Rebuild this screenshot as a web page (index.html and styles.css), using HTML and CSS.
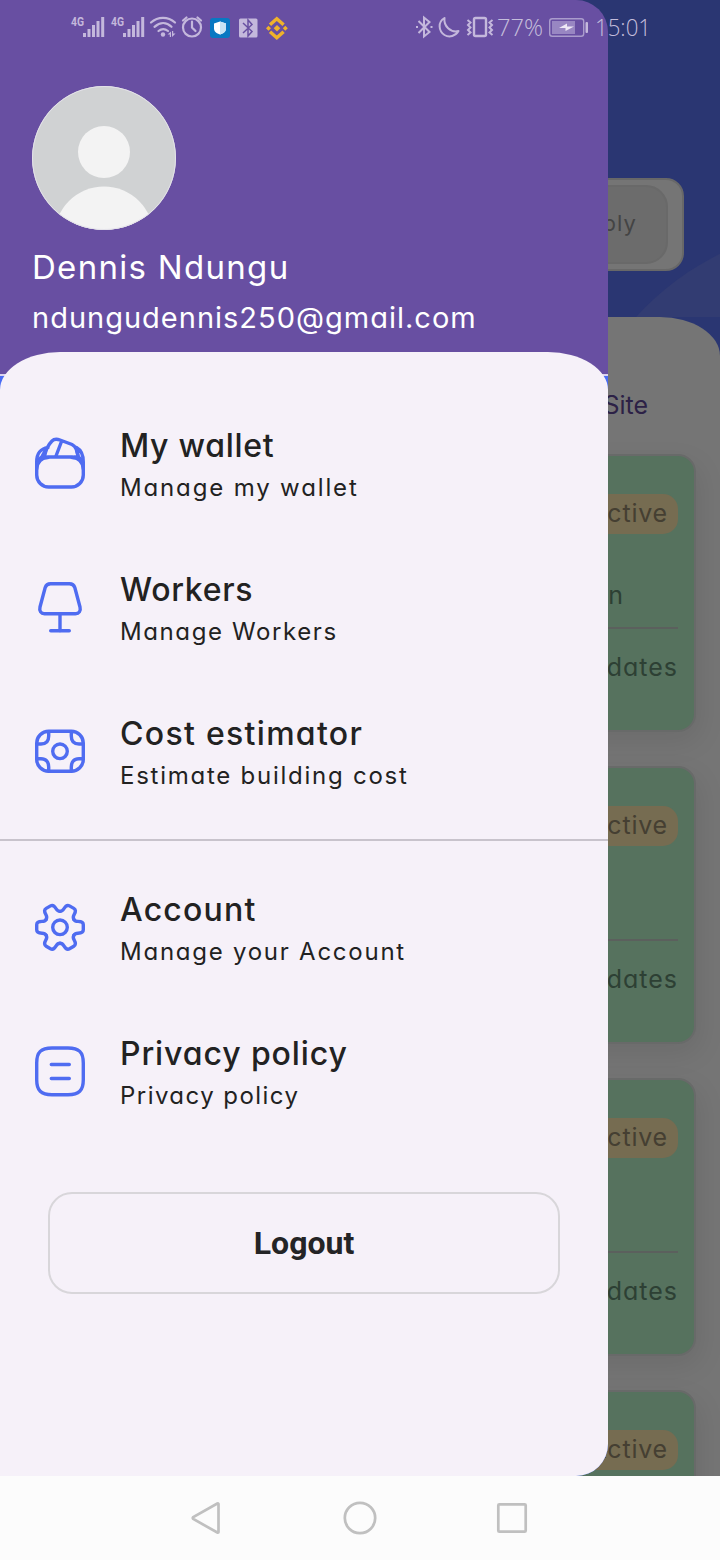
FILE: index.html
```html
<!DOCTYPE html>
<html lang="en">
<head>
<meta charset="utf-8">
<title>Menu</title>
<link rel="stylesheet" href="styles.css">
</head>
<body>
<div class="phone">
  <main class="home">
    <div class="hero">
      <div class="hero-glow"></div>
      <div class="search"><span class="supply">Supply</span></div>
    </div>
    <section class="feed">
      <div class="tabs">Site</div>
      <article class="card"><span class="badge">Active</span><p class="place">n</p><p class="updates">Updates</p></article>
      <article class="card"><span class="badge">Active</span><p class="place"></p><p class="updates">Updates</p></article>
      <article class="card"><span class="badge">Active</span><p class="place"></p><p class="updates">Updates</p></article>
      <article class="card"><span class="badge">Active</span></article>
    </section>
  </main>

  <aside class="drawer">
    <header class="profile">
      <svg class="avatar" viewBox="0 0 144 144">
        <defs><clipPath id="round"><circle cx="72" cy="72" r="72"/></clipPath></defs>
        <g clip-path="url(#round)"><rect width="144" height="144" fill="#d0d2d3"/><circle cx="72" cy="66" r="26" fill="#f3f3f3"/><circle cx="72" cy="150" r="49.5" fill="#f3f3f3"/></g>
        <circle cx="72" cy="72" r="71.5" fill="none" stroke="#e4e2ea" stroke-width="1"/>
      </svg>
      <div class="name">Dennis Ndungu</div>
      <div class="email">ndungudennis250@gmail.com</div>
    </header>
    <nav class="menu">
      <a class="item">
        <svg class="icon" viewBox="0 0 60 60"><rect x="6.7" y="24" width="46.6" height="30" rx="12"/><path d="M6.7 36V29C6.7 20 10 16 18 14.5M14.5 24C15.500 17 19 11 22 8C24 6 27 6 30 7L42 11.500C46 13.500 47.500 17 48 24M31.500 8.500L26 23M46.500 14.500C51 17 53.300 21 53.300 29V36"/><path d="M8 28C9 25.500 11 24 15 24M52 28C51 25.500 49 24 45 24"/><path d="M8 30C9 26.500 13 24.500 18 24.500M52 30C51 26.500 47 24.500 42 24.500M11.500 24.500L15.500 17M48.500 24.500L46.500 17"/></svg>
        <span class="label"><b class="title t-wallet">My wallet</b><span class="sub s-wallet">Manage my wallet</span></span>
      </a>
      <a class="item">
        <svg class="icon" viewBox="0 0 60 60"><path d="M20.500 6.700H39.500C42.500 6.700 44 8 44.800 10.500L50 30C51 34 49 36.700 45.500 36.700H14.500C11 36.700 9 34 10 30L15.200 10.500C16 8 17.500 6.700 20.500 6.700ZM30 37V54M20.700 53.700H39.300"/></svg>
        <span class="label"><b class="title t-workers">Workers</b><span class="sub s-workers">Manage Workers</span></span>
      </a>
      <a class="item">
        <svg class="icon" viewBox="0 0 60 60"><rect x="6.700" y="10.300" width="46.600" height="40" rx="12"/><circle cx="30" cy="30.300" r="7.300"/><path d="M18.700 11V15C18.700 20 16 23 11 23H7M41.300 11V15C41.300 20 44 23 49 23H53M18.700 50V46C18.700 41 16 37.700 11 37.700H7M41.300 50V46C41.300 41 44 37.700 49 37.700H53"/></svg>
        <span class="label"><b class="title t-cost">Cost estimator</b><span class="sub s-cost">Estimate building cost</span></span>
      </a>
      <hr class="rule">
      <a class="item">
        <svg class="icon" viewBox="0 0 60 60">
          <defs><path id="tooth" d="M13.800 -8C14.800 -6.300 16.500 -5.900 18 -5.900C21.500 -5.900 23.300 -4.500 23.300 -2.500V2.500C23.300 4.500 21.500 5.900 18 5.900C16.500 5.900 14.800 6.300 13.800 8"/></defs>
          <g transform="translate(30 30.300)"><circle r="7.300"/><use href="#tooth"/><use href="#tooth" transform="rotate(60)"/><use href="#tooth" transform="rotate(120)"/><use href="#tooth" transform="rotate(180)"/><use href="#tooth" transform="rotate(240)"/><use href="#tooth" transform="rotate(300)"/></g>
        </svg>
        <span class="label"><b class="title t-account">Account</b><span class="sub s-account">Manage your Account</span></span>
      </a>
      <a class="item">
        <svg class="icon" viewBox="0 0 60 60"><path d="M22 7H38C49 7 53.300 11 53.300 22V38.700C53.300 49.500 49 53.700 38 53.700H22C11 53.700 6.700 49.500 6.700 38.700V22C6.700 11 11 7 22 7ZM21.300 23.500H39.300M21.300 37.500H39.300"/></svg>
        <span class="label"><b class="title t-privacy">Privacy policy</b><span class="sub s-privacy">Privacy policy</span></span>
      </a>
      <button class="logout">Logout</button>
    </nav>
  </aside>

  <div class="status">
    <svg class="status-icons" viewBox="0 0 720 56">
      <g fill="#c4b8dc">
        <text class="net" x="71" y="26" textLength="13" lengthAdjust="spacingAndGlyphs">4G</text>
        <text class="net" x="111" y="26" textLength="13" lengthAdjust="spacingAndGlyphs">4G</text>
        <path id="bars" d="M83 33h3v4h-3zM87.500 29h3v8h-3zM92 25h3v12h-3zM96.500 21h3v16h-3zM101.200 17h3v20h-3z"/>
        <use href="#bars" x="40"/>
        <circle cx="163" cy="34.500" r="2.200"/>
        <path d="M167.500 34.500l3.500 -3v5.500h-1.200v-2.500zM175.500 33.500l-3.500 3.500v-6h1.200v2.500z"/>
        <rect x="239" y="18.500" width="18.500" height="19" rx="1.500"/>
      </g>
      <g fill="none" stroke="#c4b8dc" stroke-width="2.200" stroke-linecap="round">
        <path d="M151 22.500C158 16.200 168 16.200 175 22.500M154.500 26.800C160 22 166.500 22 171.500 26.800M158.500 31C161.500 28.500 165 28.500 168 31"/>
        <circle cx="192" cy="27.500" r="9"/><path d="M192 22v6l3.500 3.500M183 21l3.500-3M201 21l-3.500-3" transform="translate(0 -.5)"/>
      </g>
      <path d="M243 23l9 8.500-4 4.500V20l4 4.500-9 8.500" fill="none" stroke="#684fa2" stroke-width="1.500"/>
      <rect x="210" y="18" width="20" height="20" rx="3" fill="#0878c2"/>
      <path d="M220 21.500l6 2v5c0 3-2.500 5-6 6-3.500-1-6-3-6-6v-5z" fill="#fff"/><path d="M220 21.500l6 2v5c0 3-2.500 5-6 6z" fill="#c7e3f4"/>
      <g fill="none" stroke="#f0b22a" stroke-width="3.400"><path d="M270 24.800l6.800-6 6.800 6M270 31.700l6.800 6 6.800-6"/></g>
      <path d="M277 25l3.300 3.300-3.300 3.300-3.300-3.300zM268.500 25.800l2.500 2.500-2.500 2.500-2.500-2.500zM285.300 25.800l2.500 2.500-2.500 2.500-2.500-2.500z" fill="#f0b22a"/>
      <g fill="none" stroke="#c4b8dc" stroke-width="2">
        <path d="M418.500 21l11 11-5.500 4.500V17.500l5.500 4.500-11 11"/>
        <path d="M416 27h2M430.500 27h2"/>
        <path d="M444.500 18c-7 4-6 13 0 17 5 3 11 1 14-4-8 2-15-5-14-13z" stroke-linejoin="round"/>
        <rect x="474" y="18" width="12" height="18" rx="1.500" stroke-width="2.400"/>
        <path d="M467.500 20l3 2.500-2.500 2.500 2.500 2.500-2.500 2.500 2.500 2.500-3 2.500M492.500 20l-3 2.500 2.500 2.500-2.500 2.500 2.500 2.500-2.500 2.500 3 2.500"/>
        <rect x="549.700" y="18.700" width="34" height="17.600" rx="2.500" stroke="#aa9ccc" stroke-width="1.400"/>
      </g>
      <rect x="552" y="21" width="23" height="13" fill="#9886c2"/><rect x="585.500" y="22" width="2.500" height="11" rx="1" fill="#c4b8dc"/>
      <path d="M559 28l8-4.500v3h7l-8.500 4.500v-3z" fill="#ede8f5"/>
      <text class="clock" x="497" y="36" textLength="46" lengthAdjust="spacingAndGlyphs">77%</text>
      <text class="clock" x="595" y="36" textLength="56" lengthAdjust="spacingAndGlyphs">15:01</text>
    </svg>
  </div>

  <footer class="navbar">
    <svg viewBox="0 0 32 32"><path d="M26.500 2V30Q26.500 31 25.300 30.500L1.300 17Q.3 16 1.300 15L25.300 1.500Q26.500 1 26.500 2Z"/></svg>
    <svg viewBox="0 0 32 32"><circle cx="16" cy="16" r="15.200"/></svg>
    <svg viewBox="0 0 32 32"><rect x="2.300" y="2.300" width="27.400" height="27.400" rx="1"/></svg>
  </footer>
</div>
</body>
</html>
```
FILE: styles.css
```css
* { box-sizing: border-box; }
body { margin: 0; }
p { margin: 0; }
.phone {
  position: relative;
  width: 720px;
  height: 1560px;
  overflow: hidden;
  display: flex;
  flex-direction: column;
  background: #fcfcfc;
  font-family: Inter, "Liberation Sans", sans-serif;
  font-feature-settings: "cv11", "ss03";
}

/* dimmed page under the drawer */
.home { height: 1476px; overflow: hidden; background: #2a3672; }
.hero { position: relative; height: 317px; padding: 178px 36px 0; overflow: hidden; }
.hero-glow {
  position: absolute;
  left: 563px;
  top: 225px;
  width: 562px;
  height: 562px;
  border-radius: 50%;
  background: #323c72;
}
.search {
  position: relative;
  height: 93px;
  padding: 5px 14px;
  border: 2px solid #686868;
  border-radius: 18px;
  background: #757575;
  display: flex;
  justify-content: flex-end;
}
.supply {
  width: 150px;
  height: 79px;
  padding-right: 29px;
  border: 2px solid #696969;
  border-radius: 22px;
  background: #6c6c6c;
  color: #444;
  font-size: 22px;
  letter-spacing: 1.1px;
  line-height: 73px;
  text-align: right;
}
.feed {
  height: 1159px;
  padding: 0 24px;
  border-radius: 60px 60px 0 0 / 39px 39px 0 0;
  background: #757575;
  display: flex;
  flex-direction: column;
  gap: 34px;
}
.tabs {
  height: 103px;
  padding: 68px 48px 0 0;
  color: #2c2146;
  font-size: 25px;
  line-height: 41px;
  text-align: right;
}
.card {
  flex: none;
  height: 278px;
  padding: 38px 16px 0;
  border: 2px solid #686a69;
  border-radius: 18px;
  background: #56725e;
  box-shadow: 4px 10px 28px rgba(0, 0, 0, .08);
  display: flex;
  flex-direction: column;
  align-items: flex-end;
}
.badge {
  height: 40px;
  padding: 0 10px 0 16px;
  border-radius: 15px;
  background: #766c51;
  color: #453f32;
  font-size: 25px;
  letter-spacing: .8px;
  line-height: 39px;
}
.place {
  width: 100%;
  height: 95px;
  padding: 41px 55px 0 0;
  border-bottom: 2px solid #5b605d;
  color: #2d4034;
  font-size: 25px;
  line-height: 41px;
  text-align: right;
}
.updates { color: #2d4034; font-size: 25px; letter-spacing: 1px; line-height: 76px; }

/* drawer */
.drawer {
  position: absolute;
  left: 0;
  top: 0;
  width: 608px;
  height: 1476px;
  overflow: hidden;
  border-radius: 0 32px 32px 0;
  background: linear-gradient(#684fa2 374px, #dcd3ee 374px, #dcd3ee 376px, #4a6cf3 376px);
  display: flex;
  flex-direction: column;
}
.profile { height: 352px; padding: 86px 32px 0; color: #fff; }
.avatar { display: block; width: 144px; height: 144px; }
.name { height: 48px; margin-top: 13px; font-size: 33px; letter-spacing: 1.3px; line-height: 48px; white-space: nowrap; }
.email { font-size: 29px; letter-spacing: 1px; line-height: 54px; white-space: nowrap; }
.menu {
  flex: 1;
  padding-top: 40px;
  border-radius: 60px 60px 0 0 / 38px 38px 0 0;
  background: #f6f1f9;
}
.item { height: 144px; padding-left: 30px; display: flex; align-items: center; gap: 30px; }
.icon { width: 60px; height: 60px; margin-bottom: 2px; fill: none; stroke: #4f6cf1; stroke-width: 3.4; stroke-linecap: round; }
.label { padding-top: 2px; display: flex; flex-direction: column; white-space: nowrap; color: #222; }
.title { font-size: 32px; font-weight: 500; line-height: 44px; }
.sub { margin-top: 2px; font-size: 24px; line-height: 36px; }
.t-wallet { letter-spacing: .7px; }
.t-workers { letter-spacing: .7px; }
.t-cost { letter-spacing: 1.3px; }
.t-account { letter-spacing: 1.2px; }
.t-privacy { letter-spacing: .9px; }
.s-wallet { letter-spacing: 1.85px; }
.s-workers { letter-spacing: 1.6px; }
.s-cost { letter-spacing: 1.75px; }
.s-account { letter-spacing: 1.75px; }
.s-privacy { letter-spacing: 1.45px; }
.rule { height: 2px; margin: 15px 0; border: 0; background: #c8c3cc; }
.logout {
  display: block;
  width: 512px;
  height: 102px;
  margin: 48px 0 0 48px;
  border: 2px solid #d8d6da;
  border-radius: 24px;
  background: transparent;
  color: #242426;
  font: 700 32px Roboto, sans-serif;
}

/* system bars */
.status { position: absolute; left: 0; top: 0; width: 720px; height: 56px; }
.status-icons { display: block; width: 720px; height: 56px; }
.net { font: 700 12px Roboto, sans-serif; }
.clock { font: 300 24px "Open Sans", sans-serif; fill: #c4bddb; }
.navbar { height: 84px; padding: 0 192px; display: flex; align-items: center; justify-content: space-between; }
.navbar svg { width: 32px; height: 32px; overflow: visible; fill: none; stroke: #c0c0c0; stroke-width: 2.700; }
```
